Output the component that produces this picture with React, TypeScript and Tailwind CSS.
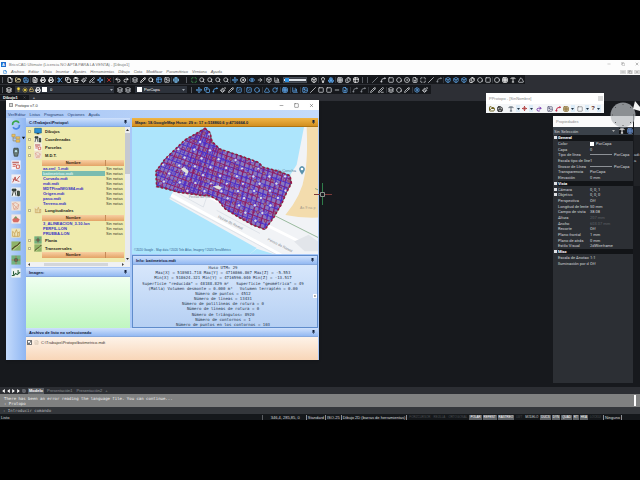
import { ReactNode } from "react";
import {
  ArrowRight,
  BarChart3,
  Box,
  Boxes,
  Circle,
  CircleDot,
  ClipboardPaste,
  Copy,
  Disc,
  Eye,
  File,
  FilePlus,
  FileText,
  Files,
  FolderOpen,
  Globe,
  Grid3x3,
  Hexagon,
  Image,
  Layers,
  Lightbulb,
  LucideIcon,
  Maximize,
  Minus,
  Move,
  Paintbrush,
  Pencil,
  PenLine,
  Printer,
  Redo2,
  RotateCw,
  Save,
  Scissors,
  Search,
  Settings,
  Slash,
  Spline,
  Square,
  SquareCheck,
  Sun,
  Table2,
  Triangle,
  Type,
  Undo2,
  Unlock,
  Waypoints,
  X,
} from "lucide-react";

type Tool = { icon: LucideIcon; color?: string; label: string };

const BLUE = "text-[#5fa8ee]";
const LIGHT = "text-[#d5d8dc]";
const DIM = "text-[#8f949b]";

const t = (icon: LucideIcon, label: string, color = LIGHT): Tool => ({
  icon,
  label,
  color,
});

const standardTools: Tool[][] = [
  [t(File, "Nuevo", "text-white"), t(FolderOpen, "Abrir", "text-[#e8d9a0]"), t(Save, "Guardar", BLUE)],
  [t(FileText, "Publicar", "text-white"), t(Printer, "Imprimir", "text-white"), t(Printer, "Vista previa", "text-white")],
  [
    t(Scissors, "Cortar", BLUE),
    t(Copy, "Copiar", "text-white"),
    t(ClipboardPaste, "Pegar", "text-white"),
    t(Paintbrush, "Igualar"),
    t(PenLine, "Borrar"),
    t(Waypoints, "Designar", BLUE),
  ],
  [t(X, "Eliminar", "text-[#e0352f]")],
  [t(Undo2, "Deshacer", "text-white"), t(Redo2, "Rehacer", "text-white")],
  [
    t(Layers, "Capas"),
    t(Pencil, "Propiedades", "text-white"),
    t(Search, "Explorador", "text-white"),
    t(Table2, "Hojas", BLUE),
    t(Image, "Imagen"),
  ],
  [t(Globe, "Web", "text-[#7cc3f5]")],
];

const viewTools: Tool[][] = [
  [
    t(Maximize, "Extensión", "text-[#47a65a]"),
    t(Search, "Zoom ventana"),
    t(Search, "Zoom previo"),
    t(Search, "Zoom más"),
    t(Search, "Zoom menos"),
  ],
  [t(Move, "Encuadre", BLUE), t(Disc, "Órbita", "text-white")],
  [t(Eye, "Mirar", BLUE), t(ArrowRight, "Avanzar")],
  [t(Box, "Vista superior"), t(BarChart3, "Vista frontal")],
];

const renderTools: Tool[][] = [
  [t(Box, "Render", "text-white")],
  [t(Lightbulb, "Luz", "text-white"), t(Boxes, "Material", BLUE)],
  [t(Grid3x3, "Malla"), t(Files, "Planos"), t(Table2, "Tabla", "text-white")],
];

const drawTools: Tool[][] = [
  [
    t(Slash, "Línea", DIM),
    t(Spline, "Polilínea"),
    t(Square, "Rectángulo"),
    t(Hexagon, "Polígono"),
    t(CircleDot, "Círculo"),
    t(FilePlus, "Bloque"),
    t(Maximize, "Región"),
    t(Slash, "Rayo"),
    t(Spline, "Arco", DIM),
  ],
  [
    t(Box, "Unión", BLUE),
    t(Box, "Diferencia", BLUE),
    t(Box, "Intersección", BLUE),
    t(Files, "Separar", "text-white"),
    t(Hexagon, "Sólido"),
    t(Square, "Caras"),
  ],
  [
    t(Circle, "Elipse"),
    t(Grid3x3, "Sombreado", "text-white"),
    t(Type, "Texto", "text-white"),
    t(Triangle, "Texto múltiple"),
  ],
];

const modifyTools: Tool[][] = [
  [
    t(Move, "Mover", BLUE),
    t(Copy, "Duplicar", BLUE),
    t(Spline, "Equidistancia", BLUE),
    t(Paintbrush, "Pincel"),
    t(Pencil, "Editar"),
    t(SquareCheck, "Seleccionar", BLUE),
  ],
  [t(SquareCheck, "Aceptar", BLUE), t(Hexagon, "Contorno", BLUE)],
  [t(Triangle, "Simetría", BLUE), t(RotateCw, "Girar", BLUE)],
  [t(Grid3x3, "Matriz", BLUE)],
  [t(BarChart3, "Escala", BLUE)],
  [
    t(Image, "Estirar", BLUE),
    t(Slash, "Recortar"),
    t(Square, "Alargar"),
    t(Square, "Partir"),
    t(Minus, "Unir"),
    t(FilePlus, "Chaflán", BLUE),
  ],
  [t(Spline, "Empalme", DIM), t(Spline, "Curva", DIM)],
  [t(Pencil, "Lápiz"), t(PenLine, "Descomponer")],
  [t(Layers, "Orden"), t(Hexagon, "Forma"), t(Pencil, "Trazo")],
  [t(Settings, "Opciones", BLUE), t(Paintbrush, "Limpiar")],
];

const ToolGroups = ({ groups, loose = false }: { groups: Tool[][]; loose?: boolean }) => (
  <div className={`flex items-center ${loose ? "gap-px" : ""}`}>
    {groups.map((group, i) => (
      <div
        key={i}
        className="flex items-center gap-[2px] border-l border-[#34373d] pl-px pr-px first:border-transparent"
      >
        {group.map(({ icon: Icon, color, label }, j) => (
          <button key={j} aria-label={label} className={color}>
            <Icon className="size-[6px]" strokeWidth={3} />
          </button>
        ))}
      </div>
    ))}
  </div>
);

const MENU = [
  "Archivo",
  "Editar",
  "Vista",
  "Insertar",
  "Ajustes",
  "Herramientas",
  "Dibujo",
  "Cota",
  "Modificar",
  "Paramétrico",
  "Ventana",
  "Ayuda",
];

const AppHeader = () => (
  <header className="bg-[#fdfdfd] text-[#5c5c5c]">
    <div className="flex h-2 items-center gap-[3px] pl-px pr-px">
      <span className="flex size-[5px] items-center justify-center bg-[#1f6fd0] font-bold text-white">
        A
      </span>
      <h1 className="flex-1 text-[#777]">
        BricsCAD Ultimate (Licencia NO APTA PARA LA VENTA) - [Dibujo1]
      </h1>
      <div className="flex items-center gap-[10px] text-[#777]">
        <button aria-label="Minimizar"><Minus className="size-[4px]" /></button>
        <button aria-label="Restaurar"><Copy className="size-[4px]" /></button>
        <button aria-label="Cerrar"><X className="size-[4px]" strokeWidth={3} /></button>
      </div>
    </div>
    <nav className="flex h-[7px] items-center gap-[4px] pl-[3px]">
      <File className="size-[4px] text-[#2f87d8]" strokeWidth={4} />
      {MENU.map((item) => (
        <a key={item} href="#" className="italic">
          {item}
        </a>
      ))}
      <div className="ml-auto flex gap-px text-[#777]">
        {[Minus, Copy, X].map((Icon, i) => (
          <button key={i} aria-label="Ventana de dibujo" className="bg-[#dcdcdc] px-px">
            <Icon className="size-[4px]" />
          </button>
        ))}
      </div>
    </nav>
  </header>
);

const Grip = () => <span className="mx-[2px] h-[6px] w-px bg-[#565a61]" />;

const Toolbars = () => (
  <div className="flex flex-col items-start gap-px bg-[#2d2f35]">
    <div className="flex h-[9px] items-center bg-[#16181c]">
      <Grip />
      <ToolGroups groups={standardTools} />
      <span className="w-[4px]" />
      <Grip />
      <ToolGroups groups={viewTools} />
      <input
        type="range"
        aria-label="Transparencia"
        defaultValue={5}
        className="mx-[2px] h-[6px] w-[24px] appearance-none border border-[#4a5059] bg-[#3b4048] [&::-webkit-slider-runnable-track]:h-[2px] [&::-webkit-slider-runnable-track]:bg-[#dfe3e8] [&::-webkit-slider-thumb]:-mt-px [&::-webkit-slider-thumb]:h-[4px] [&::-webkit-slider-thumb]:w-[4px] [&::-webkit-slider-thumb]:appearance-none [&::-webkit-slider-thumb]:bg-[#2c8fe0]"
      />
      <ToolGroups groups={renderTools} />
      <Grip />
      <Grip />
      <ToolGroups groups={drawTools} />
    </div>
    <div className="flex h-[9px] items-center bg-[#16181c] pr-[2px]">
      <Grip />
      <span className="w-px" />
      <Layers className="size-[6px] text-white" strokeWidth={3} />
      <div className="ml-[3px] flex w-[99px] items-center gap-px bg-[#2d323b] px-px">
        <Lightbulb className="size-[5px] text-[#f2d544]" fill="currentColor" />
        <Sun className="size-[6px] text-[#f2d544]" fill="currentColor" />
        <Unlock className="size-[5px] text-[#e5c469]" strokeWidth={3} />
        <Printer className="size-[6px] text-white" strokeWidth={3} />
        <span className="size-[5px] bg-white" />
        <select aria-label="Capa" className="h-[7px] flex-1 appearance-none pl-[2px] text-white">
          <option>0</option>
        </select>
        <svg viewBox="0 0 6 4" className="h-[2px] w-[3px]">
          <path d="M0 0 3 4 6 0" fill="#9aa0a8" />
        </svg>
      </div>
      <div className="ml-[3px] mr-[4px] flex gap-[2px] text-[#cfd3d8]">
        <Layers className="size-[6px]" strokeWidth={3} />
        <Layers className="size-[6px]" strokeWidth={3} />
      </div>
      <div className="flex w-[52px] items-center gap-[2px] bg-[#2d323b] px-[2px]">
        <span className="size-[5px] bg-white" />
        <select aria-label="Color" className="h-[7px] flex-1 appearance-none text-white">
          <option>PorCapa</option>
        </select>
        <svg viewBox="0 0 6 4" className="h-[2px] w-[3px]">
          <path d="M0 0 3 4 6 0" fill="#9aa0a8" />
        </svg>
      </div>
      <span className="w-[2px]" />
      <Grip />
      <ToolGroups groups={modifyTools} loose />
    </div>
  </div>
);

const SIDE_ICONS: { label: string; art: ReactNode }[] = [
  {
    label: "Actualizar",
    art: (
      <>
        <path d="M4 12A8 8 0 0 1 19 7" stroke="#3aa64a" strokeWidth="4" fill="none" />
        <path d="M20 12A8 8 0 0 1 5 17" stroke="#4a86e0" strokeWidth="4" fill="none" />
      </>
    ),
  },
  {
    label: "Árbol",
    art: (
      <>
        <path d="M5 6V19H13M5 12H13" stroke="#8a7a50" strokeWidth="1.5" fill="none" />
        <path d="M2 3h8v6H2zM12 9h9v5h-9zM12 16h9v6h-9z" fill="#ecc05a" stroke="#a98435" />
      </>
    ),
  },
  {
    label: "Topografía",
    art: (
      <>
        <path d="M7 3h10l1 8-2 11H8L6 11z" fill="#6d7f7a" stroke="#37433f" strokeWidth="2" />
        <circle cx="12" cy="10" r="4" fill="#b8e0e8" stroke="#222" />
      </>
    ),
  },
  {
    label: "Listado",
    art: (
      <>
        <path d="M1 1h22v22H1z" fill="#f7f7fa" />
        <path d="M3 4h16v4H3z" fill="#c0726d" />
        <path d="M4 11h8M4 15h7M13 12h7v8h-7z" stroke="#c84b3b" strokeWidth="2" fill="none" />
      </>
    ),
  },
  {
    label: "Perfiles",
    art: (
      <>
        <path d="M1 1h22v22H1z" fill="#f3eef0" />
        <path d="M4 20 10 7 12 16 21 5M4 12l16 6" stroke="#b4443e" strokeWidth="2" fill="none" />
      </>
    ),
  },
  {
    label: "Estación",
    art: (
      <>
        <path d="M1 1h22v22H1z" fill="#eef0ec" />
        <path d="M3 5h9v4H3zM6 9 3 21M9 9l3 12M15 10h5v11h-4z" stroke="#1d2420" strokeWidth="2" fill="#49624f" />
      </>
    ),
  },
  {
    label: "Parcelas",
    art: (
      <>
        <path d="M1 1h22v22H1z" fill="#efe2d6" />
        <path d="m4 6 7-2 8 5-3 10-9 1zM4 6l12 13M19 9 7 20" stroke="#d9957e" strokeWidth="1.5" fill="none" />
      </>
    ),
  },
  {
    label: "Modelo",
    art: (
      <>
        <path d="M1 1h22v22H1z" fill="#f2e6e2" />
        <path d="m3 14 8-8 10 7-4 7H6z" fill="#d86b62" />
        <path d="m7 10 5-5 3 6z" fill="#70a266" />
      </>
    ),
  },
  {
    label: "Curvado",
    art: (
      <>
        <path d="M1 1h22v22H1z" fill="#efe5b8" />
        <path d="M4 20V8l5 5 4-9 3 9 4-4v11zM9 13v7M16 13v7" stroke="#bb8f3c" strokeWidth="1.5" fill="none" />
      </>
    ),
  },
  {
    label: "Longitudinales",
    art: (
      <>
        <path d="M1 1h22v22H1z" fill="#8fb368" />
        <path d="m2 20 8-7 5-2 7-8" stroke="#4b3b1d" strokeWidth="2.5" fill="none" />
        <path d="m5 22 16-14" stroke="#e2e8a2" strokeWidth="1.5" />
      </>
    ),
  },
  {
    label: "Planta",
    art: (
      <>
        <path d="M1 1h22v22H1z" fill="#74b27d" />
        <circle cx="12" cy="12" r="5" fill="#276b4c" />
        <path d="M12 2v20M2 12h20" stroke="#c25a4c" strokeWidth="1.5" />
      </>
    ),
  },
  {
    label: "Transversales",
    art: (
      <>
        <path d="M1 1h22v22H1z" fill="#eef3ee" />
        <path d="M2 18h5l4-5 4 3 7-6M6 8v8M17 5v8" stroke="#285e3a" strokeWidth="2.5" fill="none" />
      </>
    ),
  },
];

const SideBar = () => (
  <aside className="w-[20px] bg-linear-to-r from-[#c3dafb] to-[#8fb6f2] pt-[2px]">
    <div className="flex h-[158px] flex-col items-center justify-between">
      {SIDE_ICONS.map(({ label, art }) => (
        <button key={label} aria-label={label}>
          <svg viewBox="0 0 24 24" className="size-[10px] overflow-visible">
            {art}
            {label === "Árbol" && <path d="m26 9 8 0-4 6z" fill="#111" />}
          </svg>
        </button>
      ))}
    </div>
  </aside>
);

const PanelTitle = ({
  children,
  orange = false,
}: {
  children: ReactNode;
  orange?: boolean;
}) => (
  <div
    className={`flex h-[9px] shrink-0 items-center justify-between border-b px-[3px] font-bold text-[#10203c] ${
      orange
        ? "border-[#b07512] bg-linear-to-b from-[#f0b545] to-[#d2901f]"
        : "border-[#86a9de] bg-linear-to-b from-[#cfe1fc] to-[#93b9f2]"
    }`}
  >
    <h2>{children}</h2>
    <svg viewBox="0 0 6 8" className="h-[4px] w-[3px]">
      <path d="M1 0h4v4h1v1H3.5v3h-1V5H0V4h1z" fill="#10203c" />
    </svg>
  </div>
);

const NameTable = ({ rows, selected }: { rows: string[]; selected?: number }) => (
  <table className="ml-[16px] w-[82px] table-fixed">
    <thead>
      <tr className="h-[6px] bg-linear-to-b from-[#f8cfa2] to-[#e3a366] leading-[6px] text-[#3b2310]">
        <th className="w-[63px] border-r border-[#c58b57]">Nombre</th>
        <th />
      </tr>
    </thead>
    <tbody>
      {rows.map((row, i) => (
        <tr key={row} className="h-[5px] leading-[5px]">
          <td
            className={`overflow-hidden whitespace-nowrap pl-px font-bold ${
              i === selected ? "bg-[#7bbcb0] text-[#d8f3ec]" : "text-[#3730c4]"
            }`}
          >
            {row}
          </td>
          <td className="whitespace-nowrap pl-px text-[#3c3b2c]">Sin notas</td>
        </tr>
      ))}
    </tbody>
  </table>
);

const TreeNode = ({
  label,
  open = false,
  icon,
}: {
  label: string;
  open?: boolean;
  icon: ReactNode;
}) => (
  <div className="flex h-2 items-center gap-[3px] pl-[2px]">
    <button
      aria-label={label}
      aria-expanded={open}
      className="size-[3px] border border-[#b9b68c] bg-[#fdfce4]"
    />
    <svg viewBox="0 0 24 24" className="size-[8px]">
      {icon}
    </svg>
    <span className="font-bold text-[#1c1c14]">{label}</span>
  </div>
);

const TreePanel = () => (
  <section className="flex h-[149px] flex-col">
    <PanelTitle>C:\Trabajos\Protopo\</PanelTitle>
    <div className="flex min-h-0 flex-1">
      <div className="min-w-0 flex-1 overflow-hidden bg-[#efebae]">
        <TreeNode
          label="Dibujos"
          icon={
            <>
              <path d="M2 4h20v14H2z" fill="#2c8fd4" stroke="#17608f" strokeWidth="2" />
              <path d="M8 20h8" stroke="#333" strokeWidth="3" />
            </>
          }
        />
        <TreeNode label="Coordenadas" icon={SIDE_ICONS[5].art} />
        <TreeNode label="Parcelas" icon={SIDE_ICONS[3].art} />
        <TreeNode label="M.D.T." open icon={SIDE_ICONS[6].art} />
        <div className="h-px" />
        <NameTable
          selected={1}
          rows={[
            "aa.xml_1.mdt",
            "batimetrico.mdt",
            "Curvado.mdt",
            "mdt.mdt",
            "MDTFinalWGS84.mdt",
            "Origen.mdt",
            "paso.mdt",
            "Terreno.mdt",
          ]}
        />
        <TreeNode label="Longitudinales" open icon={SIDE_ICONS[8].art} />
        <div className="h-px" />
        <NameTable rows={["3_ALINEACION_3-10.lon", "PERFIL.LON", "PRUEBA.LON"]} />
        <TreeNode label="Planta" icon={SIDE_ICONS[10].art} />
        <TreeNode label="Transversales" open icon={SIDE_ICONS[9].art} />
        <NameTable rows={[]} />
      </div>
      <div className="flex w-[5px] flex-col items-center justify-between bg-[#e9ebee] py-[2px]">
        <svg viewBox="0 0 6 4" className="h-[2px] w-[3px]">
          <path d="m0 4 3-4 3 4" fill="#333" />
        </svg>
        <span className="mb-auto mt-[2px] h-[41px] w-full bg-[#c5c9d0]" />
        <svg viewBox="0 0 6 4" className="h-[2px] w-[3px]">
          <path d="m0 0 3 4 3-4" fill="#333" />
        </svg>
      </div>
    </div>
    <div className="flex h-[5px] items-center justify-between bg-[#f0f1f3] px-[2px]">
      <svg viewBox="0 0 4 6" className="h-[3px] w-[2px]">
        <path d="M4 0 0 3l4 3" fill="#444" />
      </svg>
      <span className="h-[3px] w-[64px] bg-[#d3d6da]" />
      <svg viewBox="0 0 4 6" className="mr-[4px] h-[3px] w-[2px]">
        <path d="m0 0 4 3-4 3" fill="#444" />
      </svg>
    </div>
  </section>
);

const SURVEY_OUTLINE =
  "225,82 240,95 246,122 270,145 330,165 385,185 400,200 440,210 480,225 484,248 470,275 455,310 432,350 405,388 370,375 325,350 285,325 265,300 240,286 215,285 145,275 110,265 80,258 78,212 105,175 165,117 200,97";

// soundings along the boat tracks
const soundings = Array.from({ length: 34 * 26 }, (_, i) => {
  const col = i % 34;
  const row = Math.floor(i / 34);
  return {
    x: 60 + col * 15 - row * 4 + Math.sin(i * 12.9898) * 4,
    y: 30 + row * 14 + col * 5 + Math.cos(i * 7.31) * 4,
    tone: (i * 7 + row * 3) % 5,
  };
});

const tracks = Array.from({ length: 44 }, (_, i) => i);

const MapView = () => (
  <svg viewBox="6 78 558 384" preserveAspectRatio="none" className="block h-[127px] w-full">
    <path d="M6 78h558v384H6z" fill="#ade5fc" />
    <path d="M522 78h42v384H360l20-18-262-148 12-24 130 20 130 55 60-75 50-80z" fill="#f1f3f6" />
    <path d="M530 78h34v274q-50 2-98-8 50-60 58-120 10-50 6-146z" fill="#f3dcad" />
    <path d="m124 284 436 240M240 290l320 160" stroke="#fff" strokeWidth="9" />
    <path d="m118 290 440 238M140 276l80 44 10-30M260 330l130 70" stroke="#d5dbe2" strokeWidth="2" fill="none" />
    <path d="M492 424l44-20 28 20v30h-40z" fill="#e2e5ea" />
    <path d="M360 462l20-16 50 16z" fill="#ade5fc" />
    <path d="m430 344 134 68M555 264l9 4" stroke="#6b9c70" strokeWidth="2" />
    <g fontFamily="Liberation Sans, sans-serif" fontSize="11" fill="#7d838c">
      <text x="440" y="213" fontSize="12" fill="#607b8f">da Concha</text>
      <text x="510" y="326" fill="#a3998a">As 9 na p</text>
      <text x="176" y="292" fill="#8797a5">Peirao do Ramal</text>
      <text transform="translate(263 352) rotate(27)">Peirao do Ramal</text>
      <text transform="translate(412 420) rotate(27)">Peirao do Ramal</text>
    </g>
    <clipPath id="survey">
      <polygon points={SURVEY_OUTLINE} />
    </clipPath>
    <polygon points={SURVEY_OUTLINE} fill="#8a78bd" />
    <g clipPath="url(#survey)">
      {tracks.slice(0, 19).map((i) => (
        <path
          key={i}
          d={`M${-40 + i * 13} 300 L${60 + i * 13} 60`}
          stroke={i % 3 ? "#5136bf" : "#8d1c78"}
          strokeWidth="3"
        />
      ))}
      {tracks.map((i) => (
        <path
          key={i}
          d={`M${210 + i * 15} 60 L${130 + i * 15} 400`}
          stroke={i % 2 ? "#86206f" : "#5a34c0"}
          strokeWidth="4"
        />
      ))}
      {tracks.map((i) => (
        <path
          key={i}
          d={`M60 ${i * 15 - 130} L520 ${i * 15 + 40}`}
          stroke={i % 2 ? "#4a30c8" : "#8f1f66"}
          strokeWidth="3"
        />
      ))}
      {soundings.map(({ x, y, tone }, i) => (
        <circle
          key={i}
          cx={x}
          cy={y}
          r={tone === 0 ? 5 : 4}
          fill={tone === 0 ? "#dcd9e2" : tone === 3 ? "#8d7f96" : "none"}
          stroke={tone % 2 ? "#9c1a58" : "#4a2cd0"}
          strokeWidth="2"
        />
      ))}
      <path d="m152 205 10-6 14 12-4 10zM248 258l16-4 12 8-8 6z" fill="#dfe5dc" />
    </g>
    <polygon points={SURVEY_OUTLINE} fill="none" stroke="#41663f" strokeWidth="2" />
    <polygon
      points={SURVEY_OUTLINE}
      fill="none"
      stroke="#9c1446"
      strokeWidth="5"
      strokeDasharray="7 6"
    />
    <path d="M516 222q-11-13-8-20 8-12 16 0 3 7-8 20" fill="#5b93ad" />
    <circle cx="516" cy="205" r="4" fill="#fff" />
    <text x="12" y="454" fontFamily="Liberation Sans, sans-serif" fontSize="9" fill="#2f5c8c">
      ©2020 Google - Map data ©2020 Tele Atlas, Imagery ©2020 TerraMetrics
    </text>
  </svg>
);

const INFO = [
  "Huso UTM= 29",
  "Max[X] = 518981.718 Max[Y] = 4716866.867 Max[Z] = -5.553",
  "Min[X] = 518624.321 Min[Y] = 4716596.040 Min[Z] = -13.517",
  'Superficie "reducida" = 48188.829 m²   Superficie "geométrica" = 49',
  "(Malla) Volumen desmonte = 0.000 m³   Volumen terraplén = 0.00",
  "Número de puntos = 4512",
  "Número de líneas = 13431",
  "Número de polilíneas de rotura = 0",
  "Número de líneas de rotura = 0",
  "Número de triángulos= 8920",
  "Número de contornos = 1",
  "Número de puntos en los contornos = 103",
];

const ProtopoWindow = () => (
  <section className="absolute -top-px left-[6px] z-10 flex h-[260px] w-[313px] flex-col bg-[#a9c8f8] shadow">
    <div className="flex h-[10px] items-center gap-[2px] bg-white pl-[3px] pr-[5px] text-[#333]">
      <span className="h-[4px] w-[4px] border border-[#999] bg-[#dcdcdc]" />
      <h2 className="flex-1">Protopo v7.0</h2>
      <div className="flex gap-[10px]">
        <button aria-label="Minimizar"><Minus className="size-[5px]" /></button>
        <button aria-label="Maximizar"><Square className="size-[5px]" /></button>
        <button aria-label="Cerrar"><X className="size-[5px]" /></button>
      </div>
    </div>
    <nav className="flex h-2 items-center gap-[4px] bg-linear-to-r from-[#a8c6f5] to-[#c5dcfb] pl-[2px] text-[#24406e]">
      {["Ver/Editar", "Listas", "Programas", "Opciones", "Ayuda"].map((item) => (
        <a key={item} href="#">{item}</a>
      ))}
    </nav>
    <div className="flex min-h-0 flex-1">
      <SideBar />
      <div className="flex min-w-0 flex-1 flex-col pr-px">
        <div className="flex gap-[2px]">
          <div className="flex w-[104px] flex-col">
            <TreePanel />
            <section className="mt-px flex flex-1 flex-col">
              <PanelTitle>Imagen:</PanelTitle>
              <div className="flex-1 bg-linear-to-b from-[#f0fff0] to-[#c0f6c0]" />
            </section>
          </div>
          <div className="flex min-w-0 flex-1 flex-col">
            <PanelTitle orange>Mapa: 18.GoogleMap Huso: 29 x: 17 x:518860.6 y:4716664.0</PanelTitle>
            <MapView />
            <div className="mt-px border border-[#5f8ccb] bg-linear-to-b from-[#dceafd] to-[#b6d0f3]">
              <PanelTitle>Info: batimetrico.mdt</PanelTitle>
              <div className="flex items-center">
                <div className="flex h-[62px] min-w-0 flex-1 flex-col items-center justify-between overflow-hidden font-['DejaVu_Sans_Mono',monospace] text-[#26344b]">
                  {INFO.map((line) => (
                    <p key={line} className="whitespace-pre leading-[5px]">{line}</p>
                  ))}
                </div>
                <button aria-label="Siguiente" className="flex size-[4px] items-center justify-center bg-white">
                  <svg viewBox="0 0 4 4" className="size-[2px]">
                    <path d="M1 0 4 2 1 4" fill="#333" />
                  </svg>
                </button>
              </div>
            </div>
          </div>
        </div>
        <PanelTitle>Archivo de listo no seleccionado</PanelTitle>
        <div className="flex-1 bg-linear-to-b from-[#fdf3e9] to-[#f8d6b8] px-px pt-[3px]">
          <label className="flex items-center gap-[2px] text-[#3d342c]">
            <span className="grid">
              <input
                type="checkbox"
                defaultChecked
                className="col-start-1 row-start-1 size-[5px] appearance-none border border-[#777] bg-white"
              />
              <svg viewBox="0 0 10 10" className="col-start-1 row-start-1 size-[5px]">
                <path d="m2 5 2 3 4-6" stroke="#333" fill="none" strokeWidth="1.5" />
              </svg>
            </span>
            <FileText className="size-[5px] text-[#c8b9a8]" />
            <span>C:\Trabajos\Protopo\batimetrico.mdt</span>
          </label>
        </div>
      </div>
    </div>
  </section>
);

const DropTool = ({ label, children }: { label: string; children: ReactNode }) => (
  <button aria-label={label} className="flex items-center gap-[2px]">
    {children}
    <span className="flex h-[7px] w-[4px] items-center justify-center bg-[#dcecf8]">
      <svg viewBox="0 0 6 4" className="h-[2px] w-[3px]">
        <path d="m0 0 3 4 3-4" fill="#234" />
      </svg>
    </span>
  </button>
);

const ProtopoToolbar = () => (
  <section className="absolute right-[36px] -top-[8px] z-20 w-[118px] bg-[#f4f6f8] text-[#333]">
    <div className="flex h-[11px] items-center justify-between bg-white pl-[3px] pr-px text-[#8b8b8b]">
      <h2>PProtopo - [SinNombre]</h2>
      <button aria-label="Cerrar" className="size-[5px] bg-[#dcdcdc]" />
    </div>
    <div className="flex h-[9px] items-center justify-between px-[3px]">
      <button aria-label="Abrir"><FolderOpen className="size-[6px] text-[#6f6420]" strokeWidth={4} /></button>
      <button aria-label="Guardar"><Save className="size-[6px] text-[#222]" strokeWidth={4} /></button>
      <span className="w-px" />
      <DropTool label="Texto"><Type className="size-[6px] text-[#33424f]" strokeWidth={3} /></DropTool>
      <DropTool label="Punto"><Move className="size-[5px] text-[#b13d3d]" strokeWidth={4} /></DropTool>
      <button aria-label="Rotar"><Redo2 className="size-[6px] text-[#7c3fae]" strokeWidth={4} /></button>
      <span className="w-px" />
      <button aria-label="Perfil"><Image className="size-[6px] text-[#555577]" strokeWidth={3} /></button>
      <button aria-label="Curvas"><Spline className="size-[6px] text-[#c32f4c]" strokeWidth={4} /></button>
      <DropTool label="Malla"><Grid3x3 className="size-[6px] text-[#8b6d2b]" strokeWidth={3} /></DropTool>
      <DropTool label="Marco"><Square className="size-[6px] text-[#555]" strokeWidth={2} /></DropTool>
      <DropTool label="Ayuda"><span className="text-[6px] font-bold text-[#5a2020]">?</span></DropTool>
    </div>
  </section>
);

type Prop = { name: string; value?: string; kind?: "line" | "swatch" | "dim" | "section" | "group" };

const PROPS: Prop[] = [
  { name: "General", kind: "section" },
  { name: "Color", value: "PorCapa", kind: "swatch" },
  { name: "Capa", value: "0" },
  { name: "Tipo de línea", value: "PorCapa", kind: "line" },
  { name: "Escala tipo de líne", value: "1" },
  { name: "Grosor de Línea", value: "PorCapa", kind: "line" },
  { name: "Transparencia", value: "PorCapa" },
  { name: "Elevación", value: "0 mm" },
  { name: "Vista", kind: "section" },
  { name: "Cámara", value: "0, 0, 1", kind: "group" },
  { name: "Objetivo", value: "0, 0, 0", kind: "group" },
  { name: "Perspectiva", value: "Off" },
  { name: "Longitud de lente", value: "50 mm" },
  { name: "Campo de vista", value: "38.08" },
  { name: "Altura", value: "207 mm", kind: "dim" },
  { name: "Ancho", value: "603.07 mm", kind: "dim" },
  { name: "Recorte", value: "Off" },
  { name: "Plano frontal", value: "1 mm" },
  { name: "Plano de atrás", value: "0 mm" },
  { name: "Estilo Visual", value: "2dWireframe" },
  { name: "Misc", kind: "section" },
  { name: "Escala de Anotac", value: "1:1" },
  { name: "Iluminación por d", value: "Off" },
];

const PropertiesPanel = () => (
  <section className="absolute bottom-[4px] right-[7px] top-[15px] w-[80px] bg-[#2c2f34] text-[#d3d5d8]">
    <h2 className="flex h-[11px] items-center bg-[#fbfbfb] pl-[3px] text-[#8b8b8b]">Propiedades</h2>
    <div className="flex h-2 items-center bg-[#3a4149] pl-px">
      <select aria-label="Selección" className="h-[7px] w-[58px] appearance-none">
        <option>Sin Selección</option>
      </select>
      <svg viewBox="0 0 6 4" className="h-[2px] w-[3px]">
        <path d="m0 0 3 4 3-4" fill="#aaa" />
      </svg>
      <div className="ml-auto flex gap-[2px] bg-[#15171a]">
        <button aria-label="Filtro"><Type className="size-[6px] text-white" strokeWidth={4} /></button>
        <button aria-label="Selección rápida"><Grid3x3 className="size-[6px] text-[#6c95d8]" strokeWidth={3} /></button>
      </div>
    </div>
    <table className="h-[131px] w-full table-fixed font-[Roboto,sans-serif] leading-[5px]">
      <colgroup>
        <col className="w-[5px]" />
        <col className="w-[32px]" />
        <col />
      </colgroup>
      <tbody>
        {PROPS.map(({ name, value, kind }) => (
          <tr key={name} className={kind === "section" ? "bg-[#121417] font-bold text-white" : ""}>
            <td className="bg-[#2c2f34]">
              {(kind === "section" || kind === "group") && (
                <span className="mx-auto block size-[3px] bg-[#dfe1e4]" />
              )}
            </td>
            <td className="whitespace-nowrap">{name}</td>
            <td className={`whitespace-nowrap ${kind === "dim" ? "text-[#5f6368]" : ""}`}>
              <span className="flex items-center gap-[2px]">
                {kind === "swatch" && <span className="size-[4px] bg-white" />}
                {kind === "line" && <span className="h-px w-[22px] bg-[#8d9196]" />}
                {value}
              </span>
            </td>
          </tr>
        ))}
      </tbody>
    </table>
  </section>
);

const Canvas = () => (
  <main className="relative flex-1 bg-[#17191d]">
    <svg viewBox="0 0 18 22" className="absolute left-[314px] top-[82px] z-20 h-[22px] w-[18px]">
      <path d="M8.500 0v22" stroke="#2f7d4a" />
      <path d="M0 11.500h18" stroke="#7b3a3a" />
      <path d="M6.500 9.500h4v4h-4z" fill="#17191d" stroke="#8d9590" />
    </svg>
    <ProtopoWindow />
    <ProtopoToolbar />
    <PropertiesPanel />
    <div className="absolute right-0 top-[15px] flex h-[70px] w-[6px] flex-col bg-[#202226] text-[#c8cbd0]">
      <span className="h-[11px] bg-[#fbfbfb]" />
      <span className="h-2 bg-[#3a4149]" />
      <span className="pt-[17px] leading-[6px]">adi</span>
      <span className="leading-[6px]">a</span>
    </div>
    <svg viewBox="0 0 32 28" className="absolute -top-px right-0 z-30 h-[28px] w-[32px]">
      <circle cx="15" cy="15" r="12.500" fill="#b9bcc0" fillOpacity=".72" />
      <path d="M15 4v1M15 25v1M4 15h1M25 15h1M7 7l1 1M22 7l1 1M7 23l1-1M22 23l1-1" stroke="#555" />
      <path d="m27 1 5 6v4l-7-2z" fill="#f3f3f3" />
    </svg>
  </main>
);

const LayoutTabs = () => (
  <div className="flex h-[7px] items-center gap-[2px] bg-[#2c2e33] px-[2px] text-[#8d9095]">
    {["M4 0 0 3l4 3", "M4 0 0 3l4 3", "m0 0 4 3-4 3", "m0 0 4 3-4 3"].map((d, i) => (
      <button key={i} aria-label="Desplazar presentaciones" className="text-white">
        <svg viewBox="0 0 4 6" className="h-[4px] w-[3px]">
          <path d={d} fill="currentColor" />
        </svg>
      </button>
    ))}
    <Grid3x3 className="size-[4px]" />
    <button className="bg-[#5a5d62] px-px font-bold leading-[6px] text-white">Modelo</button>
    <button className="px-px">Presentación1</button>
    <button className="px-px">Presentación2</button>
    <button>+</button>
  </div>
);

const MODES: { label: string; on?: boolean; plain?: boolean }[] = [
  { label: "FORZCURSOR" },
  { label: "REJILLA" },
  { label: "ORTOGONAL" },
  { label: "POLAR", on: true },
  { label: "REFENT", on: true },
  { label: "RASTREO", on: true },
  { label: "LWT" },
  { label: "MODELO", plain: true },
  { label: "DUCS", on: true },
  { label: "DYN", on: true },
  { label: "QUAD", on: true },
  { label: "RT", on: true },
  { label: "HKA", on: true },
  { label: "LOCKUI" },
];

const StatusBar = () => (
  <footer className="flex h-[6px] items-center bg-[#15181b] px-px text-[#d8dadd]">
    <span className="flex-1">Listo</span>
    <span className="mr-[6px] border-l border-[#5b5e62] pl-[8px]">346,4, 285,85, 0</span>
    {["Standard", "ISO-25", "Dibujo 2D (barras de herramientas)"].map((item) => (
      <button key={item} className="border-l border-[#8b8e92] px-px">{item}</button>
    ))}
    <div className="flex gap-px border-l border-[#8b8e92] pl-px text-[3px]">
      {MODES.map(({ label, on, plain }) => (
        <button
          key={label}
          className={`px-px leading-[5px] ${
            on ? "bg-[#5d6165] text-white" : plain ? "text-[#d8dadd]" : "text-[#4a4e52]"
          }`}
        >
          {label}
        </button>
      ))}
    </div>
    <button className="ml-px mr-[17px] border-x border-[#8b8e92] px-px">Ninguno</button>
  </footer>
);

export default function App() {
  return (
    <div className="flex min-h-screen flex-col bg-black py-[60px] font-['Liberation_Sans',sans-serif] text-[4px] leading-[5px]">
      <AppHeader />
      <Toolbars />
      <div className="flex h-[7px] items-center bg-[#2d2f35] text-white">
        <button className="flex items-center gap-[5px] bg-[#17191d] px-[3px] font-bold">
          Dibujo1
          <X className="size-[3px] text-[#999]" />
        </button>
        <button aria-label="Nuevo dibujo" className="ml-[4px]">+</button>
      </div>
      <Canvas />
      <LayoutTabs />
      <div className="flex h-[13px] items-center justify-between bg-[#808181] pl-[4px] pr-[4px] font-['DejaVu_Sans_Mono',monospace] text-[#f0f0f0]">
        <div className="leading-[5px]">
          <p>There has been an error reading the language file. You can continue...</p>
          <p>: Protopo</p>
        </div>
        <span className="h-[11px] w-[2px] bg-white" />
      </div>
      <input
        aria-label="Línea de comandos"
        defaultValue=": Introducir comando"
        className="h-[7px] bg-[#34373b] pl-[3px] font-['DejaVu_Sans_Mono',monospace] text-[#b5b8bc]"
      />
      <StatusBar />
    </div>
  );
}
